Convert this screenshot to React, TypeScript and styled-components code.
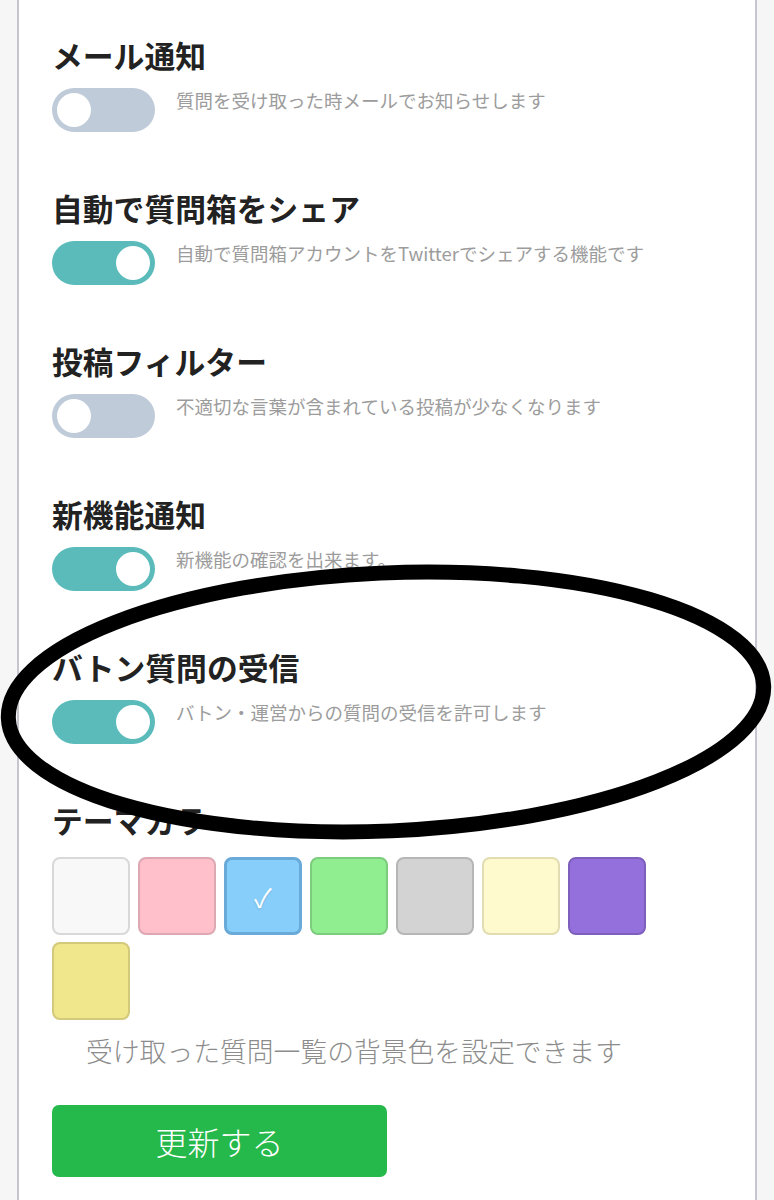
import React, { useState } from "react";
import styled, { createGlobalStyle } from "styled-components";

const GlobalStyle = createGlobalStyle`
  body {
    margin: 0;
    background: #f6f6f7;
    font-family: "Noto Sans CJK JP", "Noto Sans", sans-serif;
  }
`;

const Page = styled.div`
  position: relative;
  padding: 0 17px;
  min-height: 1200px;
  overflow: hidden;
`;

const Card = styled.div`
  background: #fff;
  border-left: 2px solid #c6c6ce;
  border-right: 2px solid #c6c6ce;
  min-height: 1200px;
  padding: 37px 33px 40px;
  box-sizing: border-box;
`;

const Section = styled.section`
  margin-bottom: 58px;
`;

const Heading = styled.h2`
  margin: 0;
  font-size: 30.8px;
  line-height: 36px;
  font-weight: 700;
  color: #222;
`;

const Row = styled.div`
  display: flex;
  align-items: flex-start;
  margin-top: 15px;
`;

const Toggle = styled.button<{ $on: boolean }>`
  position: relative;
  flex: 0 0 auto;
  width: 103px;
  height: 44px;
  border: none;
  padding: 0;
  border-radius: 22px;
  background: ${(p) => (p.$on ? "#5bbbbb" : "#bfcbd9")};
  cursor: pointer;

  &::after {
    content: "";
    position: absolute;
    top: 5px;
    left: ${(p) => (p.$on ? "64px" : "5px")};
    width: 34px;
    height: 34px;
    border-radius: 50%;
    background: #fff;
  }
`;

const Desc = styled.p`
  margin: 0 0 0 21px;
  font-size: 18.5px;
  line-height: 24px;
  color: #9c9c9c;
`;

const Swatches = styled.div`
  display: flex;
  flex-wrap: wrap;
  gap: 7px 8px;
  margin-top: 19px;
`;

const Swatch = styled.div<{ $color: string; $border: string; $selected: boolean }>`
  display: flex;
  align-items: center;
  justify-content: center;
  width: 78px;
  height: 78px;
  box-sizing: border-box;
  border-radius: 8px;
  background: ${(p) => p.$color};
  border: ${(p) => (p.$selected ? "3px" : "2px")} solid ${(p) => p.$border};
  color: #fff;
  font-size: 26px;
  text-shadow: 0 1px 2px rgba(0, 0, 0, 0.15);
  cursor: pointer;
`;

const ThemeNote = styled.p`
  margin: 13px 0 0 34px;
  font-size: 26.8px;
  line-height: 36px;
  font-weight: 300;
  color: #8c8c8c;
`;

const Submit = styled.button`
  display: block;
  margin-top: 36px;
  width: 335px;
  height: 72px;
  border: none;
  border-radius: 7px;
  background: #25b84a;
  color: #fff;
  font-family: inherit;
  font-size: 32px;
  font-weight: 300;
  cursor: pointer;
`;

const Annotation = styled.svg`
  position: absolute;
  left: 0;
  top: 560px;
  pointer-events: none;
`;

const settings = [
  { title: "メール通知", desc: "質問を受け取った時メールでお知らせします", on: false },
  { title: "自動で質問箱をシェア", desc: "自動で質問箱アカウントをTwitterでシェアする機能です", on: true },
  { title: "投稿フィルター", desc: "不適切な言葉が含まれている投稿が少なくなります", on: false },
  { title: "新機能通知", desc: "新機能の確認を出来ます。", on: true },
  { title: "バトン質問の受信", desc: "バトン・運営からの質問の受信を許可します", on: true },
];

const colors = [
  { c: "#f8f8f8", b: "#d8d8d8" },
  { c: "#ffc0cb", b: "#dca8b2" },
  { c: "#87cefa", b: "#6aaad8" },
  { c: "#90ee90", b: "#7dcc7d" },
  { c: "#d3d3d3", b: "#b6b6b6" },
  { c: "#fffacd", b: "#e2dcb2" },
  { c: "#9370db", b: "#7d5fbd" },
  { c: "#f0e68c", b: "#d3c97a" },
];

export default function App() {
  const [flags, setFlags] = useState(settings.map((s) => s.on));
  const [selected, setSelected] = useState(2);

  return (
    <Page>
      <GlobalStyle />
      <Card>
        {settings.map((s, i) => (
          <Section key={s.title}>
            <Heading>{s.title}</Heading>
            <Row>
              <Toggle
                $on={flags[i]}
                onClick={() => setFlags(flags.map((f, j) => (j === i ? !f : f)))}
              />
              <Desc>{s.desc}</Desc>
            </Row>
          </Section>
        ))}
        <div>
          <Heading>テーマカラー</Heading>
          <Swatches>
            {colors.map((c, i) => (
              <Swatch
                key={c.c}
                $color={c.c}
                $border={c.b}
                $selected={selected === i}
                onClick={() => setSelected(i)}
              >
                {selected === i ? "✓" : ""}
              </Swatch>
            ))}
          </Swatches>
          <ThemeNote>受け取った質問一覧の背景色を設定できます</ThemeNote>
          <Submit>更新する</Submit>
        </div>
      </Card>
      <Annotation width="774" height="290" viewBox="0 0 774 290">
        <ellipse
          cx="386"
          cy="142"
          rx="378"
          ry="129"
          fill="none"
          stroke="#000"
          strokeWidth="15"
          transform="rotate(-2.5 386 142)"
        />
      </Annotation>
    </Page>
  );
}
